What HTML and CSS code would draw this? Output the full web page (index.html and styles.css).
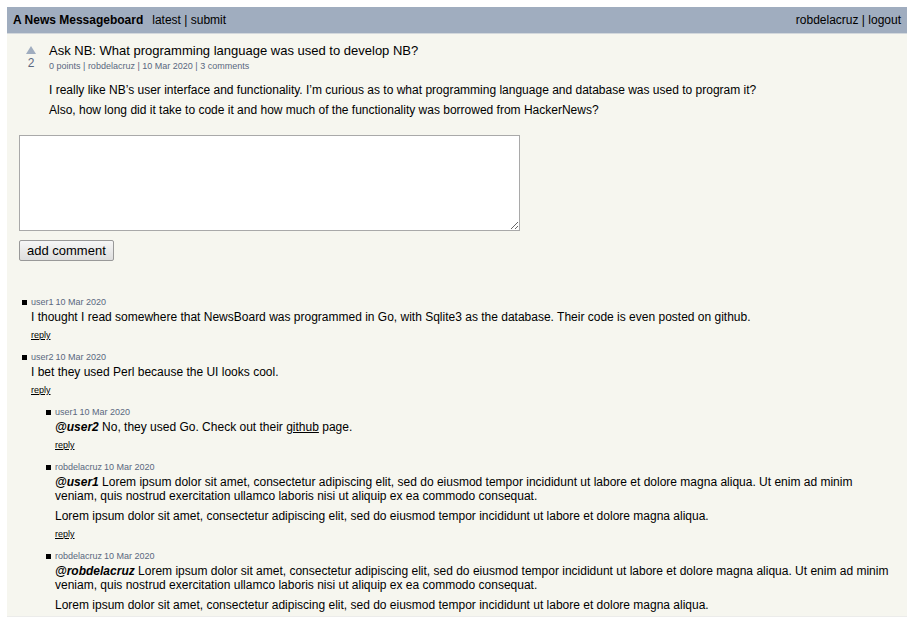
FILE: index.html
```html
<!DOCTYPE html>
<html lang="en">
<head>
<meta charset="utf-8">
<title>A News Messageboard</title>
<link rel="stylesheet" href="styles.css">
</head>
<body>
<div class="page">
  <header class="masthead">
    <nav class="nav">
      <h1 class="site-name"><a href="#">A News Messageboard</a></h1>
      <span><a href="#">latest</a> | <a href="#">submit</a></span>
    </nav>
    <div><a href="#">robdelacruz</a> | <a href="#">logout</a></div>
  </header>
  <main class="content">
    <article class="entry">
      <div class="votes">
        <button class="upvote" type="button" aria-label="Upvote"><svg class="arrow" viewBox="0 0 10 8" aria-hidden="true"><path d="M5 0 10 8H0Z"/></svg></button>
        <span>2</span>
      </div>
      <div class="entry-main">
        <h2 class="title"><a href="#">Ask NB: What programming language was used to develop NB?</a></h2>
        <div class="meta">0 points | <a href="#">robdelacruz</a> | 10 Mar 2020 | <a href="#">3 comments</a></div>
        <div class="text entry-text">
          <p>I really like NB’s user interface and functionality. I’m curious as to what programming language and database was used to program it?</p>
          <p>Also, how long did it take to code it and how much of the functionality was borrowed from HackerNews?</p>
        </div>
      </div>
    </article>
    <form class="comment-form">
      <textarea class="comment-box" aria-label="Comment"></textarea>
      <button class="submit" type="button">add comment</button>
    </form>
    <ul class="comments">
      <li class="comment">
        <div class="meta"><a href="#">user1</a> 10 Mar 2020</div>
        <div class="text"><p>I thought I read somewhere that NewsBoard was programmed in Go, with Sqlite3 as the database. Their code is even posted on github.</p></div>
        <a class="reply" href="#">reply</a>
      </li>
      <li class="comment">
        <div class="meta"><a href="#">user2</a> 10 Mar 2020</div>
        <div class="text"><p>I bet they used Perl because the UI looks cool.</p></div>
        <a class="reply" href="#">reply</a>
        <ul class="comments replies">
          <li class="comment">
            <div class="meta"><a href="#">user1</a> 10 Mar 2020</div>
            <div class="text"><p><a class="mention" href="#">@user2</a> No, they used Go. Check out their <a class="link" href="#">github</a> page.</p></div>
            <a class="reply" href="#">reply</a>
          </li>
          <li class="comment">
            <div class="meta"><a href="#">robdelacruz</a> 10 Mar 2020</div>
            <div class="text">
              <p><a class="mention" href="#">@user1</a> Lorem ipsum dolor sit amet, consectetur adipiscing elit, sed do eiusmod tempor incididunt ut labore et dolore magna aliqua. Ut enim ad minim veniam, quis nostrud exercitation ullamco laboris nisi ut aliquip ex ea commodo consequat.</p>
              <p>Lorem ipsum dolor sit amet, consectetur adipiscing elit, sed do eiusmod tempor incididunt ut labore et dolore magna aliqua.</p>
            </div>
            <a class="reply" href="#">reply</a>
          </li>
          <li class="comment">
            <div class="meta"><a href="#">robdelacruz</a> 10 Mar 2020</div>
            <div class="text">
              <p><a class="mention" href="#">@robdelacruz</a> Lorem ipsum dolor sit amet, consectetur adipiscing elit, sed do eiusmod tempor incididunt ut labore et dolore magna aliqua. Ut enim ad minim veniam, quis nostrud exercitation ullamco laboris nisi ut aliquip ex ea commodo consequat.</p>
              <p>Lorem ipsum dolor sit amet, consectetur adipiscing elit, sed do eiusmod tempor incididunt ut labore et dolore magna aliqua.</p>
            </div>
          </li>
        </ul>
      </li>
    </ul>
  </main>
</div>
</body>
</html>
```
FILE: styles.css
```css
* {
  box-sizing: border-box;
}

body {
  margin: 7px 5px 0 7px;
  background: #fff;
  color: #000;
  font: 12px/14px "Liberation Sans", Arial, sans-serif;
}

a {
  color: inherit;
  text-decoration: none;
}

h1,
h2,
p,
ul {
  margin: 0;
  padding: 0;
  font-size: inherit;
}

.page {
  background: #f6f6ef;
  border-bottom: 1px solid #ececea;
}

.masthead {
  display: flex;
  justify-content: space-between;
  padding: 6px;
  background: #a0adbf;
  border-bottom: 1px solid #d3d8dc;
}

.nav {
  display: flex;
  gap: 9px;
}

.content {
  padding: 9px 12px 4px;
}

.entry {
  display: flex;
  gap: 12px;
}

.votes {
  display: flex;
  flex-direction: column;
  align-items: center;
  width: 18px;
  padding: 3px 0 0 6px;
  color: #5a6880;
}

.upvote {
  display: block;
  padding: 0;
  border: 0;
  background: none;
}

.arrow {
  display: block;
  width: 10px;
  height: 8px;
  margin-bottom: 2px;
  fill: #a0adbf;
}

.title {
  font-size: 13px;
  font-weight: normal;
  line-height: 16px;
}

.meta,
.reply {
  font-size: 9px;
  line-height: 12px;
}

.meta {
  color: #5a6880;
}

.entry .meta {
  margin-top: 1px;
}

.text {
  display: grid;
  gap: 6px;
}

.entry-text {
  margin-top: 11px;
}

.comment-form {
  display: flex;
  flex-direction: column;
  align-items: flex-start;
  gap: 9px;
  margin: 18px 0 35px;
}

.comment-box {
  width: 501px;
  max-width: 100%;
  height: 96px;
  border: 1px solid #a9a9a9;
  background: #fff;
}

.submit {
  padding: 2px 7px;
  border: 1px solid #999;
  border-radius: 2px;
  background: linear-gradient(#f6f6f6, #dedede);
  color: #000;
  font: 13px/15px "Liberation Sans", Arial, sans-serif;
}

.comments {
  display: grid;
  gap: 10px;
  list-style: none;
}

.comment {
  padding-left: 12px;
}

.comment > .meta {
  display: flex;
  align-items: center;
  gap: 2px;
  margin: 0 0 2px -9px;
}

.comment > .meta::before {
  width: 5px;
  height: 5px;
  margin-right: 2px;
  background: #000;
  content: "";
}

.reply {
  display: block;
  width: fit-content;
  margin-top: 5px;
  text-decoration: underline;
}

.replies {
  margin-top: 10px;
  padding-left: 12px;
}

.mention {
  font-style: italic;
  font-weight: bold;
}

.link {
  text-decoration: underline;
}
```
